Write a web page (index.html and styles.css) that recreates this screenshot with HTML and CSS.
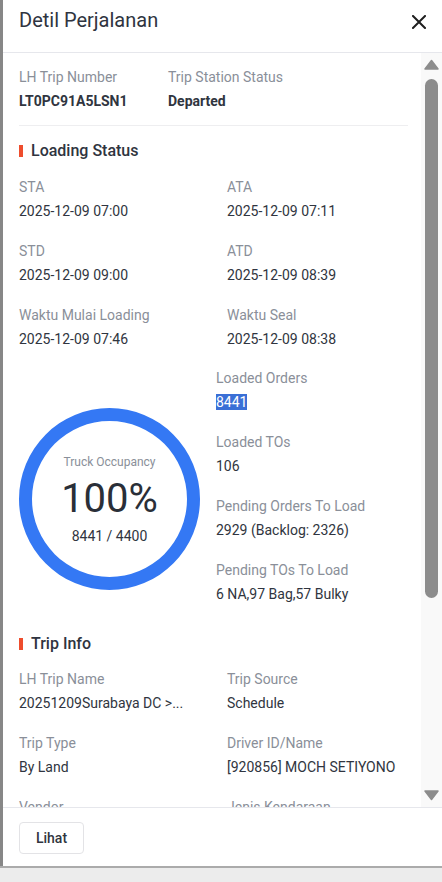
FILE: index.html
```html
<!DOCTYPE html>
<html lang="id">
<head>
<meta charset="utf-8">
<title>Detil Perjalanan</title>
<link rel="stylesheet" href="styles.css">
</head>
<body>
<div class="stage">
  <div class="backdrop-strip"></div>
  <div class="dialog">
    <div class="dialog-header">
      <h1 class="dialog-title">Detil Perjalanan</h1>
      <button class="close-btn" aria-label="Tutup">
        <svg width="14" height="14" viewBox="0 0 14 14"><path d="M1 1L13 13M13 1L1 13" stroke="#1f1f1f" stroke-width="2" stroke-linecap="square"/></svg>
      </button>
    </div>
    <div class="dialog-body">
      <div class="scroll-content">
        <div class="summary-row">
          <div class="field">
            <div class="label">LH Trip Number</div>
            <div class="value strong">LT0PC91A5LSN1</div>
          </div>
          <div class="field">
            <div class="label">Trip Station Status</div>
            <div class="value strong">Departed</div>
          </div>
        </div>
        <div class="divider"></div>

        <h2 class="section-title">Loading Status</h2>
        <div class="grid2">
          <div class="field"><div class="label">STA</div><div class="value">2025-12-09 07:00</div></div>
          <div class="field"><div class="label">ATA</div><div class="value">2025-12-09 07:11</div></div>
          <div class="field"><div class="label">STD</div><div class="value">2025-12-09 09:00</div></div>
          <div class="field"><div class="label">ATD</div><div class="value">2025-12-09 08:39</div></div>
          <div class="field"><div class="label">Waktu Mulai Loading</div><div class="value">2025-12-09 07:46</div></div>
          <div class="field"><div class="label">Waktu Seal</div><div class="value">2025-12-09 08:38</div></div>
        </div>

        <div class="occupancy">
          <div class="ring">
            <div class="ring-caption">Truck Occupancy</div>
            <div class="ring-percent">100%</div>
            <div class="ring-count">8441 / 4400</div>
          </div>
          <div class="occ-list">
            <div class="field"><div class="label">Loaded Orders</div><div class="value"><span class="selected">8441</span></div></div>
            <div class="field"><div class="label">Loaded TOs</div><div class="value">106</div></div>
            <div class="field"><div class="label">Pending Orders To Load</div><div class="value">2929 (Backlog: 2326)</div></div>
            <div class="field"><div class="label">Pending TOs To Load</div><div class="value">6 NA,97 Bag,57 Bulky</div></div>
          </div>
        </div>

        <h2 class="section-title trip-title">Trip Info</h2>
        <div class="grid2">
          <div class="field"><div class="label">LH Trip Name</div><div class="value">20251209Surabaya DC &gt;...</div></div>
          <div class="field"><div class="label">Trip Source</div><div class="value">Schedule</div></div>
          <div class="field"><div class="label">Trip Type</div><div class="value">By Land</div></div>
          <div class="field"><div class="label">Driver ID/Name</div><div class="value">[920856] MOCH SETIYONO</div></div>
          <div class="field"><div class="label">Vendor</div><div class="value">-</div></div>
          <div class="field"><div class="label">Jenis Kendaraan</div><div class="value">-</div></div>
        </div>
      </div>
      <div class="scrollbar">
        <svg class="arrow" width="15" height="11" viewBox="0 0 15 11"><path d="M7.5 1.5L14 10H1z" fill="#8c8c8c" stroke="#8c8c8c" stroke-width="1.5" stroke-linejoin="round"/></svg>
        <div class="thumb-track"><div class="thumb"></div></div>
        <svg class="arrow" width="15" height="11" viewBox="0 0 15 11"><path d="M7.5 9.5L14 1H1z" fill="#8c8c8c" stroke="#8c8c8c" stroke-width="1.5" stroke-linejoin="round"/></svg>
      </div>
    </div>
    <div class="dialog-footer">
      <button class="btn">Lihat</button>
    </div>
  </div>
</div>
<div class="bottom-line"></div>
<div class="bottom-area"></div>
</body>
</html>
```

FILE: styles.css
```css
* { box-sizing: border-box; }
html, body { margin: 0; padding: 0; }
body {
  width: 442px;
  height: 882px;
  overflow: hidden;
  background: #ececec;
  font-family: Roboto, "Liberation Sans", Arial, sans-serif;
  color: #303540;
  display: flex;
  flex-direction: column;
}
.stage {
  display: flex;
  height: 866px;
  flex: none;
}
.backdrop-strip {
  width: 3px;
  background: #878787;
  flex: none;
}
.dialog {
  flex: 1;
  background: #fff;
  display: flex;
  flex-direction: column;
  min-width: 0;
}
.dialog-header {
  height: 53px;
  flex: none;
  border-bottom: 1px solid #e6e7ec;
  display: flex;
  align-items: flex-start;
  justify-content: space-between;
  padding: 8px 0 0 16px;
}
.dialog-title {
  margin: 0;
  font-size: 20px;
  line-height: 24px;
  font-weight: 400;
  color: #2f3440;
}
.close-btn {
  border: 0;
  background: none;
  padding: 0;
  margin: 7px 16px 0 0;
  width: 14px;
  height: 14px;
  display: flex;
}
.dialog-body {
  flex: 1;
  display: flex;
  min-height: 0;
  overflow: hidden;
}
.scroll-content {
  flex: 1;
  min-width: 0;
  padding: 14px 13px 0 16px;
  overflow: hidden;
}
.scrollbar {
  width: 21px;
  flex: none;
  background: #f9f9f9;
  display: flex;
  flex-direction: column;
  align-items: flex-start;
  padding: 6px 0 6px 0;
}
.arrow { display: block; margin-left: 3px; flex: none; }
.thumb-track {
  flex: 1;
  padding: 9px 0 0 4px;
}
.thumb {
  width: 13px;
  height: 519px;
  background: #8c8c8c;
  border-radius: 7px;
}
.field { min-width: 0; }
.label {
  font-size: 14px;
  line-height: 20px;
  color: #8a8f99;
}
.value {
  font-size: 14px;
  line-height: 20px;
  margin-top: 4px;
  color: #303540;
  white-space: nowrap;
}
.value.strong { font-weight: 700; }
.summary-row {
  display: grid;
  grid-template-columns: 149px 1fr;
}
.divider {
  height: 1px;
  background: #eeeef0;
  margin-top: 14px;
}
.section-title {
  margin: 13px 0 14px 0;
  font-size: 16px;
  line-height: 24px;
  font-weight: 500;
  color: #2f3440;
  display: flex;
  align-items: center;
  gap: 8px;
}
.section-title::before {
  content: "";
  width: 4px;
  height: 12px;
  background: #ee4d2d;
  flex: none;
}
.grid2 {
  display: grid;
  grid-template-columns: 208px 1fr;
  row-gap: 20px;
}
.occupancy {
  display: flex;
  gap: 16px;
  margin-top: 19px;
}
.ring {
  width: 181px;
  height: 182px;
  flex: none;
  margin-top: 40px;
  border: 13px solid #3478f4;
  border-radius: 50%;
  display: flex;
  flex-direction: column;
  align-items: center;
  justify-content: center;
  padding-top: 2px;
}
.ring-caption {
  font-size: 12px;
  line-height: 16px;
  color: #8a8f99;
}
.ring-percent {
  font-size: 40px;
  line-height: 46px;
  color: #2a2f38;
  margin-top: 6px;
}
.ring-count {
  font-size: 14px;
  line-height: 20px;
  color: #303540;
  margin-top: 4px;
}
.occ-list {
  display: flex;
  flex-direction: column;
  gap: 20px;
}
.selected {
  background: #3a6fd6;
  color: #fff;
}
.trip-title { margin-top: 28px; margin-bottom: 13px; }
.dialog-footer {
  height: 59px;
  flex: none;
  border-top: 1px solid #e6e7ec;
  padding: 14px 16px 0 16px;
}
.btn {
  width: 65px;
  height: 32px;
  border: 1px solid #e3e3e6;
  border-radius: 4px;
  background: #fff;
  font-family: Roboto, "Liberation Sans", Arial, sans-serif;
  font-size: 14px;
  font-weight: 500;
  color: #303540;
  padding: 0;
}
.bottom-line {
  height: 2px;
  background: #ababab;
  flex: none;
}
.bottom-area {
  flex: 1;
  background: #ececec;
}
```
